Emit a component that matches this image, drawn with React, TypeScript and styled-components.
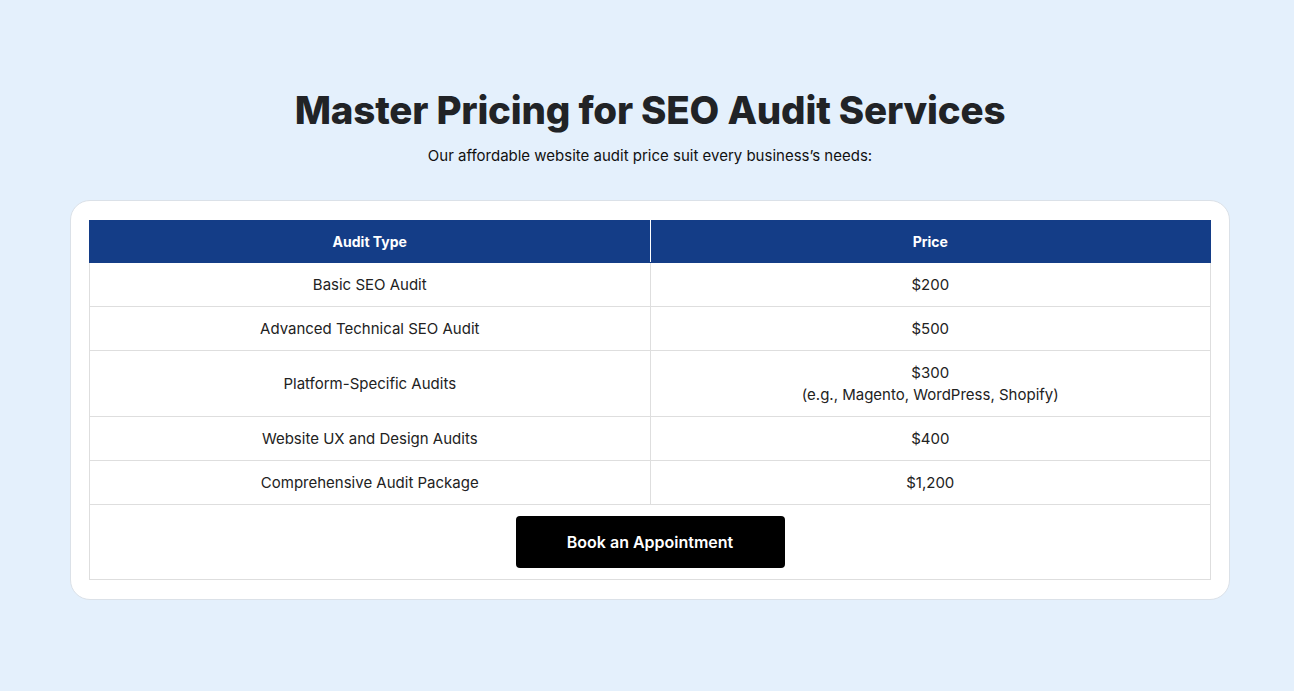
import styled, { createGlobalStyle } from 'styled-components';

const GlobalStyle = createGlobalStyle`
    html, body {
        margin: 0;
        padding: 0;
        background: #e4f0fc;
    }
    body {
        font-family: Inter, 'Open Sans', sans-serif;
        color: #222;
    }
`;

type Row = { type: string; price: string; note?: string };

const rows: Row[] = [
    { type: 'Basic SEO Audit', price: '$200' },
    { type: 'Advanced Technical SEO Audit', price: '$500' },
    {
        type: 'Platform-Specific Audits',
        price: '$300',
        note: '(e.g., Magento, WordPress, Shopify)',
    },
    { type: 'Website UX and Design Audits', price: '$400' },
    { type: 'Comprehensive Audit Package', price: '$1,200' },
];

const App = () => {
    return (
        <>
            <GlobalStyle />
            <Page>
                <Title>Master Pricing for SEO Audit Services</Title>
                <Subtitle>
                    Our affordable website audit price suit every business’s
                    needs:
                </Subtitle>
                <Card>
                    <Table>
                        <thead>
                            <tr>
                                <HeadCell>Audit Type</HeadCell>
                                <HeadCell>Price</HeadCell>
                            </tr>
                        </thead>
                        <tbody>
                            {rows.map((row) => (
                                <tr key={row.type}>
                                    <Cell>{row.type}</Cell>
                                    <Cell>
                                        {row.price}
                                        {row.note && (
                                            <>
                                                <br />
                                                {row.note}
                                            </>
                                        )}
                                    </Cell>
                                </tr>
                            ))}
                            <tr>
                                <ButtonCell colSpan={2}>
                                    <BookButton>Book an Appointment</BookButton>
                                </ButtonCell>
                            </tr>
                        </tbody>
                    </Table>
                </Card>
            </Page>
        </>
    );
};

export default App;

const Page = styled.div`
    min-height: 691px;
    box-sizing: border-box;
    padding: 85px 64px 40px 70px;
    display: flex;
    flex-direction: column;
    align-items: center;
`;

const Title = styled.h1`
    margin: 0;
    font-size: 38.5px;
    line-height: 50px;
    font-weight: 800;
    color: #212326;
    letter-spacing: -0.2px;
`;

const Subtitle = styled.p`
    margin: 10px 0 0;
    font-size: 15px;
    line-height: 22px;
    color: #111;
`;

const Card = styled.div`
    margin-top: 33px;
    width: 100%;
    box-sizing: border-box;
    background: #fff;
    border: 1px solid #dbe1e8;
    border-radius: 20px;
    padding: 19px 18px 19px 18px;
`;

const Table = styled.table`
    width: 100%;
    border-collapse: collapse;
    table-layout: fixed;
`;

const HeadCell = styled.th`
    background: #143d87;
    color: #fff;
    font-size: 14px;
    font-weight: 700;
    line-height: 22px;
    padding: 9.5px 10px;
    border: 1px solid #143d87;
    border-right: 1px solid #fff;

    &:last-child {
        border-right: 1px solid #143d87;
    }
`;

const Cell = styled.td`
    text-align: center;
    font-size: 15px;
    line-height: 22px;
    color: #222;
    padding: 10.5px 10px;
    border: 1px solid #dedede;
`;

const ButtonCell = styled.td`
    text-align: center;
    padding: 11px 10px 11px;
    border: 1px solid #dedede;
`;

const BookButton = styled.button`
    width: 269px;
    height: 52px;
    background: #000;
    color: #fff;
    border: none;
    border-radius: 4px;
    font-family: Inter, 'Open Sans', sans-serif;
    font-size: 16px;
    font-weight: 600;
    cursor: pointer;
`;
